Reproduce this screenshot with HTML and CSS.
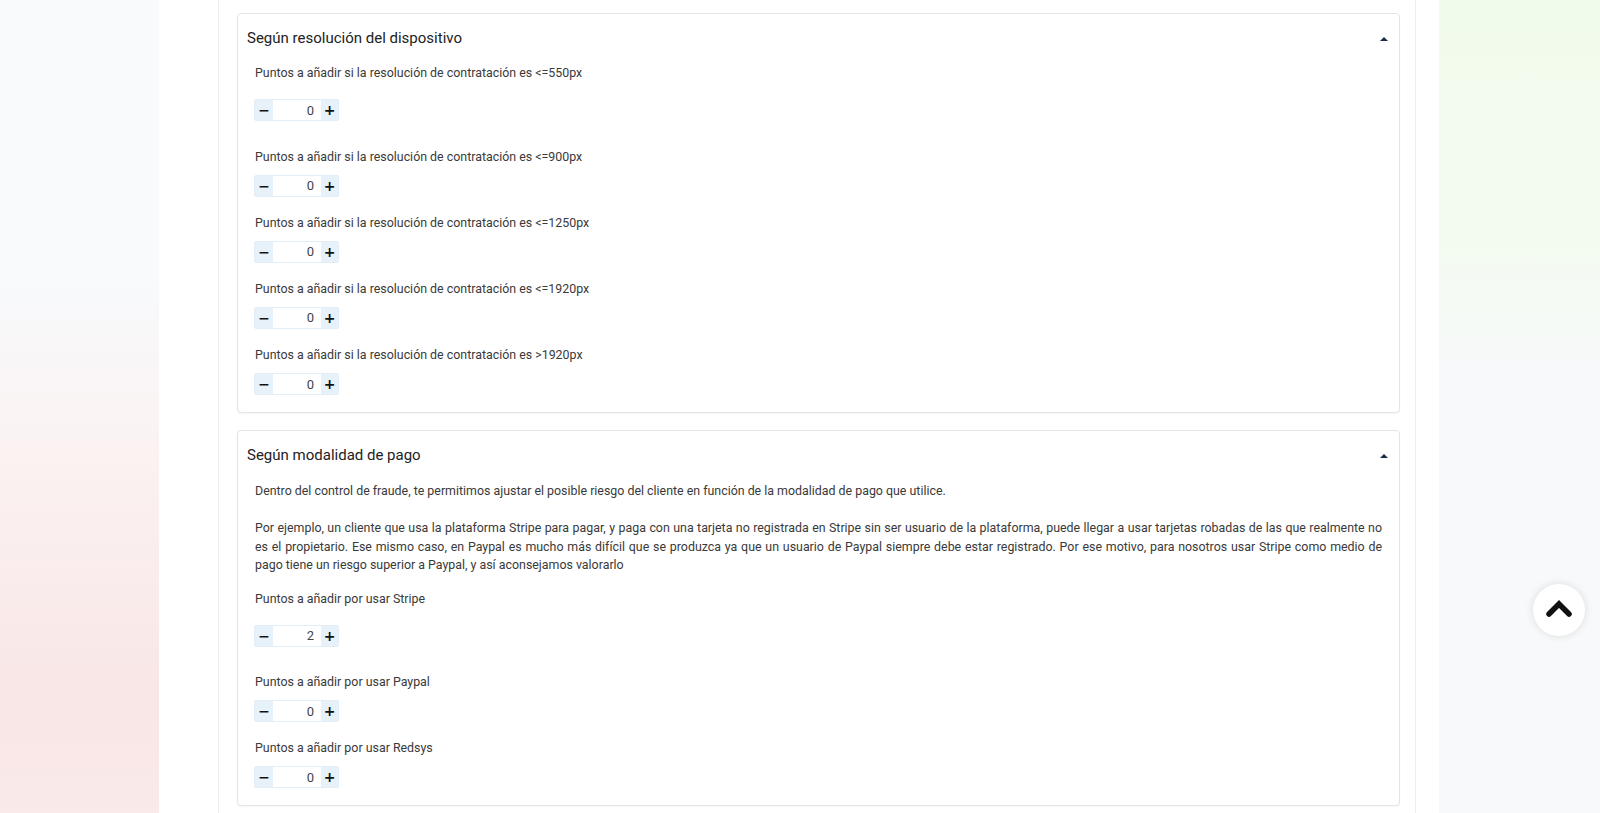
FILE: index.html
```html
<!DOCTYPE html>
<html lang="es">
<head>
    <meta charset="UTF-8">
    <meta name="viewport" content="width=device-width, initial-scale=1.0">
    <title>Control de fraude</title>
    <link rel="stylesheet" href="styles.css">
</head>
<body>
    <div class="page">
        <div class="side side-left"></div>

        <div class="main-panel">
            <div class="content">

                <div class="card">
                    <div class="card-header">
                        <h3 class="card-title">Según resolución del dispositivo</h3>
                        <span class="caret"></span>
                    </div>
                    <div class="card-body">
                        <div class="field first">
                            <label class="field-label">Puntos a añadir si la resolución de contratación es &lt;=550px</label>
                            <div class="spinner">
                                <button class="spin-btn minus">&minus;</button>
                                <input class="spin-value" type="text" value="0">
                                <button class="spin-btn plus">+</button>
                            </div>
                        </div>
                        <div class="field">
                            <label class="field-label">Puntos a añadir si la resolución de contratación es &lt;=900px</label>
                            <div class="spinner">
                                <button class="spin-btn minus">&minus;</button>
                                <input class="spin-value" type="text" value="0">
                                <button class="spin-btn plus">+</button>
                            </div>
                        </div>
                        <div class="field">
                            <label class="field-label">Puntos a añadir si la resolución de contratación es &lt;=1250px</label>
                            <div class="spinner">
                                <button class="spin-btn minus">&minus;</button>
                                <input class="spin-value" type="text" value="0">
                                <button class="spin-btn plus">+</button>
                            </div>
                        </div>
                        <div class="field">
                            <label class="field-label">Puntos a añadir si la resolución de contratación es &lt;=1920px</label>
                            <div class="spinner">
                                <button class="spin-btn minus">&minus;</button>
                                <input class="spin-value" type="text" value="0">
                                <button class="spin-btn plus">+</button>
                            </div>
                        </div>
                        <div class="field last">
                            <label class="field-label">Puntos a añadir si la resolución de contratación es &gt;1920px</label>
                            <div class="spinner">
                                <button class="spin-btn minus">&minus;</button>
                                <input class="spin-value" type="text" value="0">
                                <button class="spin-btn plus">+</button>
                            </div>
                        </div>
                    </div>
                </div>

                <div class="card">
                    <div class="card-header">
                        <h3 class="card-title">Según modalidad de pago</h3>
                        <span class="caret"></span>
                    </div>
                    <div class="card-body">
                        <p class="card-text">
                            Dentro del control de fraude, te permitimos ajustar el posible riesgo del cliente en función de la modalidad de pago que utilice.<br><br>
                            Por ejemplo, un cliente que usa la plataforma Stripe para pagar, y paga con una tarjeta no registrada en Stripe sin ser usuario de la plataforma, puede llegar a usar tarjetas robadas de las que realmente no es el propietario. Ese mismo caso, en Paypal es mucho más difícil que se produzca ya que un usuario de Paypal siempre debe estar registrado. Por ese motivo, para nosotros usar Stripe como medio de pago tiene un riesgo superior a Paypal, y así aconsejamos valorarlo
                        </p>
                        <div class="field first">
                            <label class="field-label">Puntos a añadir por usar Stripe</label>
                            <div class="spinner">
                                <button class="spin-btn minus">&minus;</button>
                                <input class="spin-value" type="text" value="2">
                                <button class="spin-btn plus">+</button>
                            </div>
                        </div>
                        <div class="field">
                            <label class="field-label">Puntos a añadir por usar Paypal</label>
                            <div class="spinner">
                                <button class="spin-btn minus">&minus;</button>
                                <input class="spin-value" type="text" value="0">
                                <button class="spin-btn plus">+</button>
                            </div>
                        </div>
                        <div class="field last">
                            <label class="field-label">Puntos a añadir por usar Redsys</label>
                            <div class="spinner">
                                <button class="spin-btn minus">&minus;</button>
                                <input class="spin-value" type="text" value="0">
                                <button class="spin-btn plus">+</button>
                            </div>
                        </div>
                    </div>
                </div>

            </div>
        </div>

        <div class="side side-right"></div>
    </div>

    <a class="scroll-top" href="#">
        <svg width="26" height="18" viewBox="0 0 26 18">
            <polyline points="3,15 13,5 23,15" fill="none" stroke="#111" stroke-width="5.5" stroke-linejoin="miter" stroke-linecap="round"/>
        </svg>
    </a>
</body>
</html>
```

FILE: styles.css
```css
body {
    margin: 0;
    padding: 0;
    font-family: Roboto, "Liberation Sans", sans-serif;
    color: #333333;
    overflow: hidden;
}

.page {
    display: grid;
    grid-template-columns: 159px 1280px 1fr;
    height: 813px;
}

.side-left {
    background: linear-gradient(180deg, #f8fafc 0%, #f8fafc 34%, #fbf2f2 55%, #f9e6e6 85%, #faeaea 100%);
}

.side-right {
    background: linear-gradient(180deg, #f1fbec 0%, #f3fbef 28%, #f7f9fa 45%, #f8f9fb 100%);
}

.main-panel {
    background-color: #ffffff;
    padding: 0 23px 0 59px;
}

.content {
    height: 100%;
    border-left: 1px solid #eeeeee;
    border-right: 1px solid #eeeeee;
    padding: 13px 15px 0 18px;
}

.card {
    border: 1px solid #e4e4e4;
    border-radius: 4px;
    box-shadow: 0 1px 2px rgba(0, 0, 0, 0.04);
    margin-bottom: 17px;
    background-color: #ffffff;
}

.card-header {
    display: flex;
    justify-content: space-between;
    align-items: center;
    height: 48px;
    padding: 0 11px 0 9px;
}

.card-title {
    margin: 0;
    font-size: 15px;
    font-weight: 400;
    color: #222222;
}

.caret {
    width: 0;
    height: 0;
    border-left: 4px solid transparent;
    border-right: 4px solid transparent;
    border-bottom: 4px solid #1b2a47;
    margin-top: 1px;
}

.card-body {
    padding: 2px 17px 17px 17px;
}

.card-text {
    margin: 1px 0 15px 0;
    font-size: 12.4px;
    line-height: 18.5px;
    text-align: justify;
    color: #3a3a3a;
}

.field {
    padding-bottom: 17.2px;
}

.field.last {
    padding-bottom: 0;
}

.field-label {
    display: block;
    font-size: 12.4px;
    line-height: 18px;
    color: #3a3a3a;
    margin-bottom: 9px;
}

.field.first .field-label {
    margin-bottom: 17px;
}

.field.first {
    padding-bottom: 26.5px;
}

.spinner {
    display: flex;
    width: 85px;
    height: 22px;
    margin-left: -1px;
    border: 1px solid #e3edf5;
    border-radius: 2px;
    box-sizing: border-box;
}

.spin-btn {
    border: none;
    padding: 0;
    background-color: #e6f1fa;
    color: #111111;
    font-family: "DejaVu Sans", sans-serif;
    font-weight: bold;
    font-size: 14px;
    line-height: 20px;
    cursor: pointer;
}

.spin-btn.minus {
    width: 18px;
}

.spin-btn.plus {
    width: 17px;
}

.spin-value {
    width: 48px;
    border: none;
    padding: 0 7px 0 0;
    text-align: right;
    font-family: Roboto, sans-serif;
    font-size: 13px;
    color: #444444;
    background-color: #ffffff;
    box-sizing: border-box;
}

.scroll-top {
    position: fixed;
    right: 15px;
    bottom: 177px;
    width: 52px;
    height: 52px;
    border-radius: 50%;
    background-color: #ffffff;
    box-shadow: 0 0 8px rgba(0, 0, 0, 0.12);
    display: flex;
    align-items: center;
    justify-content: center;
}

.scroll-top svg {
    margin-top: -4px;
}
```
